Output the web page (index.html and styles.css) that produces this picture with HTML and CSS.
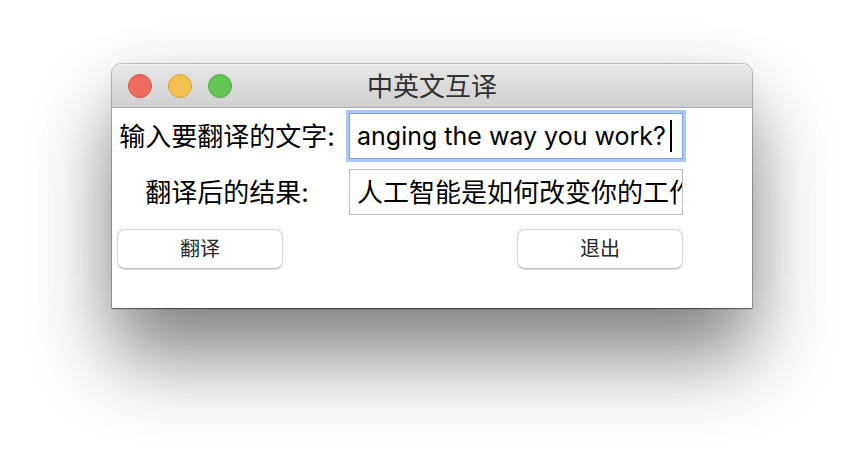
FILE: index.html
```html
<!DOCTYPE html>
<html lang="zh-CN">
<head>
<meta charset="utf-8">
<meta name="viewport" content="width=device-width, initial-scale=1">
<title>中英文互译</title>
<link rel="stylesheet" href="styles.css">
</head>
<body>
<main class="window">
  <header class="titlebar">
    <div class="controls">
      <button class="control control-close" type="button" aria-label="关闭"></button>
      <button class="control control-minimize" type="button" aria-label="最小化"></button>
      <button class="control control-zoom" type="button" aria-label="缩放"></button>
    </div>
    <h1 class="title">中英文互译</h1>
  </header>
  <form class="form">
    <label class="label" for="source">输入要翻译的文字:</label>
    <div class="field">
      <input class="entry entry-active" id="source" type="text" value="anging the way you work?">
      <span class="caret"></span>
    </div>
    <label class="label" for="result">翻译后的结果:</label>
    <div class="field">
      <input class="entry" id="result" type="text" value="人工智能是如何改变你的工作">
    </div>
    <div class="actions">
      <button class="button" type="button">翻译</button>
      <button class="button" type="button">退出</button>
    </div>
  </form>
</main>
</body>
</html>
```
FILE: styles.css
```css
* {
  box-sizing: border-box;
}

body {
  min-height: 100vh;
  margin: 0;
  padding: 64px 112px;
  background: #fff;
  color: #000;
  font-family: Inter, "Noto Sans CJK SC", sans-serif;
  font-size: 26px;
}

.window {
  border-radius: 10px 10px 0 0;
  background: #fff;
  box-shadow:
    0 0 1px 1px rgba(0, 0, 0, 0.25),
    0 1px 1px rgba(0, 0, 0, 0.4),
    0 50px 80px rgba(0, 0, 0, 0.48),
    0 0 60px rgba(0, 0, 0, 0.06);
}

.titlebar {
  display: grid;
  grid-template-columns: 1fr auto 1fr;
  align-items: center;
  height: 44px;
  padding: 0 16px;
  border-bottom: 1px solid #adadad;
  border-radius: 10px 10px 0 0;
  background: linear-gradient(#e8e8e8, #cfcfcf);
  box-shadow: inset 0 1px #f4f4f4;
}

.controls {
  display: flex;
  gap: 16px;
}

.control {
  width: 24px;
  height: 24px;
  padding: 0;
  border: 1px solid;
  border-radius: 50%;
}

.control-close {
  border-color: #d6554b;
  background: #ed6b5f;
}

.control-minimize {
  border-color: #d9a441;
  background: #f5c04f;
}

.control-zoom {
  border-color: #52a941;
  background: #62c655;
}

.title {
  margin: 0;
  padding-top: 2px;
  color: #303030;
  font-size: 26px;
  font-weight: 400;
  line-height: 40px;
}

.form {
  display: grid;
  grid-template-columns: 220px 1fr;
  gap: 10px 12px;
  align-items: center;
  padding: 5px 69px 39px 5px;
}

.label {
  padding-bottom: 4px;
  text-align: center;
  white-space: nowrap;
}

.field {
  position: relative;
}

.entry {
  display: block;
  width: 100%;
  height: 46px;
  padding: 0 0 4px 7px;
  border: 1px solid #bfbfbf;
  border-radius: 0;
  outline: none;
  background: #fff;
  color: #000;
  font: inherit;
}

.entry-active {
  padding-bottom: 0;
  border-color: #7fa5dc;
  box-shadow: 0 0 0 3px #a8c9f9;
  font-size: 25px;
}

.caret {
  position: absolute;
  top: 7px;
  right: 11px;
  width: 2px;
  height: 32px;
  background: #000;
}

.actions {
  display: flex;
  grid-column: 1 / -1;
  justify-content: space-between;
  padding-top: 4px;
}

.button {
  width: 166px;
  height: 40px;
  padding: 0 0 4px;
  border: 1px solid #d4d4d4;
  border-bottom-color: #bdbdbd;
  border-radius: 8px;
  background: #fff;
  box-shadow: 0 1px 1px rgba(0, 0, 0, 0.15);
  color: #262626;
  font-family: inherit;
  font-size: 20px;
}
```
